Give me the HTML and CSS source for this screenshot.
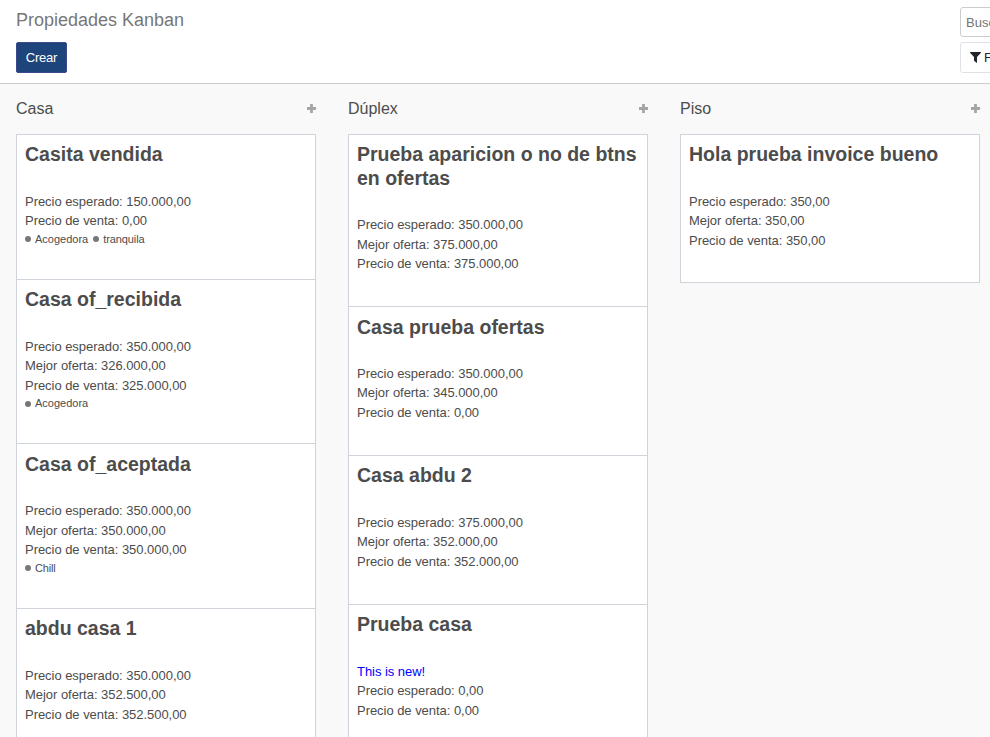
FILE: index.html
```html
<!DOCTYPE html>
<html lang="es">
<head>
<meta charset="utf-8">
<title>Propiedades Kanban</title>
<link rel="stylesheet" href="styles.css">
</head>
<body>
<svg width="0" height="0" class="defs"><defs>
<symbol id="plus" viewBox="0 0 9 9"><path d="M3.1 0h2.8v3.1H9v2.8H5.9V9H3.1V5.9H0V3.1h3.1z"/></symbol>
</defs></svg>
<header class="control-panel">
  <div class="panel-left">
    <h1 class="breadcrumb">Propiedades Kanban</h1>
    <button class="create">Crear</button>
  </div>
  <div class="panel-right">
    <div class="search">Buscar...</div>
    <div class="filters"><svg class="funnel" viewBox="0 0 11 11"><path d="M.3 0h10.4l.3.7-4 4.2V11L4 8.7V4.9L0 .7z"/></svg>Filtros</div>
  </div>
</header>
<main class="board">
  <section class="column">
    <div class="column-head"><h2>Casa</h2><svg class="add"><use href="#plus"/></svg></div>
    <article class="card"><h3>Casita vendida</h3>
      <p>Precio esperado: 150.000,00</p><p>Precio de venta: 0,00</p>
      <div class="tags"><span class="tag">Acogedora</span><span class="tag">tranquila</span></div></article>
    <article class="card"><h3>Casa of_recibida</h3>
      <p>Precio esperado: 350.000,00</p><p>Mejor oferta: 326.000,00</p><p>Precio de venta: 325.000,00</p>
      <div class="tags"><span class="tag">Acogedora</span></div></article>
    <article class="card"><h3>Casa of_aceptada</h3>
      <p>Precio esperado: 350.000,00</p><p>Mejor oferta: 350.000,00</p><p>Precio de venta: 350.000,00</p>
      <div class="tags"><span class="tag chill">Chill</span></div></article>
    <article class="card"><h3>abdu casa 1</h3>
      <p>Precio esperado: 350.000,00</p><p>Mejor oferta: 352.500,00</p><p>Precio de venta: 352.500,00</p></article>
  </section>
  <section class="column">
    <div class="column-head"><h2>Dúplex</h2><svg class="add"><use href="#plus"/></svg></div>
    <article class="card"><h3>Prueba aparicion o no de btns<br>en ofertas</h3>
      <p>Precio esperado: 350.000,00</p><p>Mejor oferta: 375.000,00</p><p>Precio de venta: 375.000,00</p></article>
    <article class="card"><h3>Casa prueba ofertas</h3>
      <p>Precio esperado: 350.000,00</p><p>Mejor oferta: 345.000,00</p><p>Precio de venta: 0,00</p></article>
    <article class="card"><h3>Casa abdu 2</h3>
      <p>Precio esperado: 375.000,00</p><p>Mejor oferta: 352.000,00</p><p>Precio de venta: 352.000,00</p></article>
    <article class="card"><h3>Prueba casa</h3>
      <p class="new">This is new!</p><p>Precio esperado: 0,00</p><p>Precio de venta: 0,00</p></article>
  </section>
  <section class="column">
    <div class="column-head"><h2>Piso</h2><svg class="add"><use href="#plus"/></svg></div>
    <article class="card"><h3>Hola prueba invoice bueno</h3>
      <p>Precio esperado: 350,00</p><p>Mejor oferta: 350,00</p><p>Precio de venta: 350,00</p></article>
  </section>
</main>
</body>
</html>
```

FILE: styles.css
```css
* { box-sizing: border-box; }
body {
  margin: 0; height: 737px; overflow: hidden;
  display: flex; flex-direction: column;
  font: 13px/19.5px "Liberation Sans", Arial, sans-serif;
  color: #4c4c4c; background: #f9f9f9;
}
h1, h2, h3, p { margin: 0; font-weight: 400; }
p { letter-spacing: -0.04px; }
.defs { position: absolute; }
.control-panel {
  flex: none; height: 84px; background: #fff; border-bottom: 1px solid #ccc;
  display: flex; justify-content: space-between; overflow: hidden;
}
.panel-left { padding: 7px 0 0 16px; }
.breadcrumb { font-size: 18px; line-height: 27px; height: 35px; color: #777; white-space: nowrap; }
.create {
  display: block; width: 51px; height: 31px; padding: 0;
  border: 1px solid #3c4a8c; border-radius: 2px;
  background: #1d457b; color: #fff; font: inherit; letter-spacing: -0.2px;
}
.panel-right { width: 30px; padding-top: 7px; overflow: hidden; }
.search, .filters {
  width: 120px; border: 1px solid #ccc; border-radius: 3px;
  white-space: nowrap; display: flex; align-items: center;
}
.search { height: 30px; padding: 1px 0 0 5px; color: #757575; }
.filters { height: 31px; margin-top: 5px; padding-left: 9px; gap: 3px; border-color: #dee2e6; color: #212529; }
.funnel { width: 11px; height: 11px; fill: #212529; }
.board { flex: 1; min-height: 0; display: flex; overflow: hidden; }
.column { flex: none; width: 332px; padding: 0 16px; }
.column-head { height: 50px; display: flex; align-items: center; justify-content: space-between; }
.column-head h2 { font-size: 16px; line-height: 24px; }
.add { width: 9px; height: 9px; margin-bottom: 1px; fill: #a5a5a5; }
.card {
  width: 300px; padding: 8.3px 8px 32.15px;
  border: 1px solid #ced4da; background: #fff;
}
.card:not(:last-child) { border-bottom: 0; padding-bottom: 32.55px; }
.card h3 { font-size: 19.5px; line-height: 23.4px; font-weight: 700; margin-bottom: 25.05px; white-space: nowrap; }
.new { color: #00f; }
.tags { display: flex; gap: 5px; height: 15.7px; padding-top: 1px; align-items: center; font-size: 11px; line-height: 15px; }
.tag { display: flex; align-items: center; gap: 4px; }
.tag::before { content: ""; width: 6px; height: 6px; border-radius: 50%; background: #777; }
.tag + .tag { letter-spacing: -0.1px; }
.chill { letter-spacing: -0.15px; }
```
